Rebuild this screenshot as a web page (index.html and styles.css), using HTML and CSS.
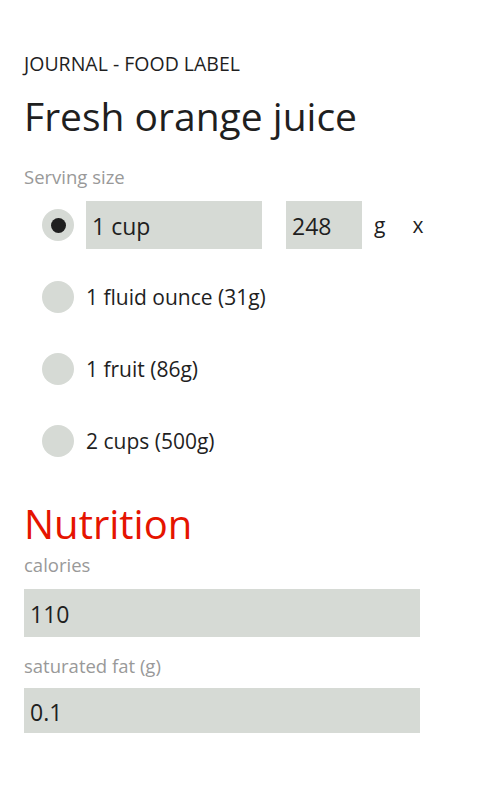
FILE: index.html
```html
<!DOCTYPE html>
<html lang="en">
<head>
  <meta charset="UTF-8" />
  <meta name="viewport" content="width=device-width, initial-scale=1.0"/>
  <title>Food Label</title>
  <link rel="stylesheet" href="styles.css">
</head>
<body>
  <div class="page">
    <div class="app-title">JOURNAL - FOOD LABEL</div>
    <h1 class="page-title">Fresh orange juice</h1>

    <div class="label">Serving size</div>
    <div class="servings">
      <div class="serving-row">
        <span class="radio checked"></span>
        <div class="field field-name">1 cup</div>
        <div class="field field-grams">248</div>
        <span class="unit">g</span>
        <span class="unit unit-x">x</span>
      </div>
      <div class="serving-row">
        <span class="radio"></span>
        <span class="serving-text">1 fluid ounce (31g)</span>
      </div>
      <div class="serving-row">
        <span class="radio"></span>
        <span class="serving-text">1 fruit (86g)</span>
      </div>
      <div class="serving-row">
        <span class="radio"></span>
        <span class="serving-text">2 cups (500g)</span>
      </div>
    </div>

    <h2 class="section-title">Nutrition</h2>
    <div class="label label-first">calories</div>
    <div class="field field-wide">110</div>
    <div class="label">saturated fat (g)</div>
    <div class="field field-wide field-last">0.1</div>
  </div>
</body>
</html>
```

FILE: styles.css
```css
body {
  margin: 0;
  background: #ffffff;
  color: #1f1f1f;
  font-family: "Open Sans", "Noto Sans", sans-serif;
}
.page {
  padding: 52px 24px 0;
}
.app-title {
  font-size: 19.5px;
  line-height: 24px;
}
.page-title {
  margin: 14px 0 0;
  font-size: 39px;
  font-weight: 400;
  line-height: 52px;
}
.label {
  margin-top: 23px;
  color: #999999;
  font-size: 18.5px;
  line-height: 24px;
}
.servings {
  margin-top: 12px;
  padding-left: 18px;
  display: flex;
  flex-direction: column;
  gap: 24px;
}
.serving-row {
  display: flex;
  align-items: center;
  height: 48px;
}
.radio {
  width: 32px;
  height: 32px;
  border-radius: 50%;
  background: #d6dad5;
  margin-right: 12px;
  display: flex;
  align-items: center;
  justify-content: center;
}
.radio.checked::after {
  content: "";
  width: 15px;
  height: 15px;
  border-radius: 50%;
  background: #1f1f1f;
}
.serving-text {
  font-size: 21px;
}
.field {
  background: #d6dad5;
  height: 48px;
  line-height: 50px;
  padding-left: 6px;
  font-size: 23px;
  box-sizing: border-box;
}
.field-name {
  width: 176px;
}
.field-grams {
  width: 76px;
  margin-left: 24px;
}
.unit {
  font-size: 21px;
  margin-left: 12px;
}
.unit-x {
  margin-left: 27px;
}
.section-title {
  margin: 35px 0 0;
  color: #e51400;
  font-size: 40px;
  font-weight: 400;
  line-height: 48px;
}
.label-first {
  margin-top: 5px;
}
.field-wide {
  width: 396px;
  margin-top: 12px;
}
.field-last {
  height: 45px;
  line-height: 48px;
  margin-top: 10px;
}
.field-wide + .label {
  margin-top: 17px;
}
```
